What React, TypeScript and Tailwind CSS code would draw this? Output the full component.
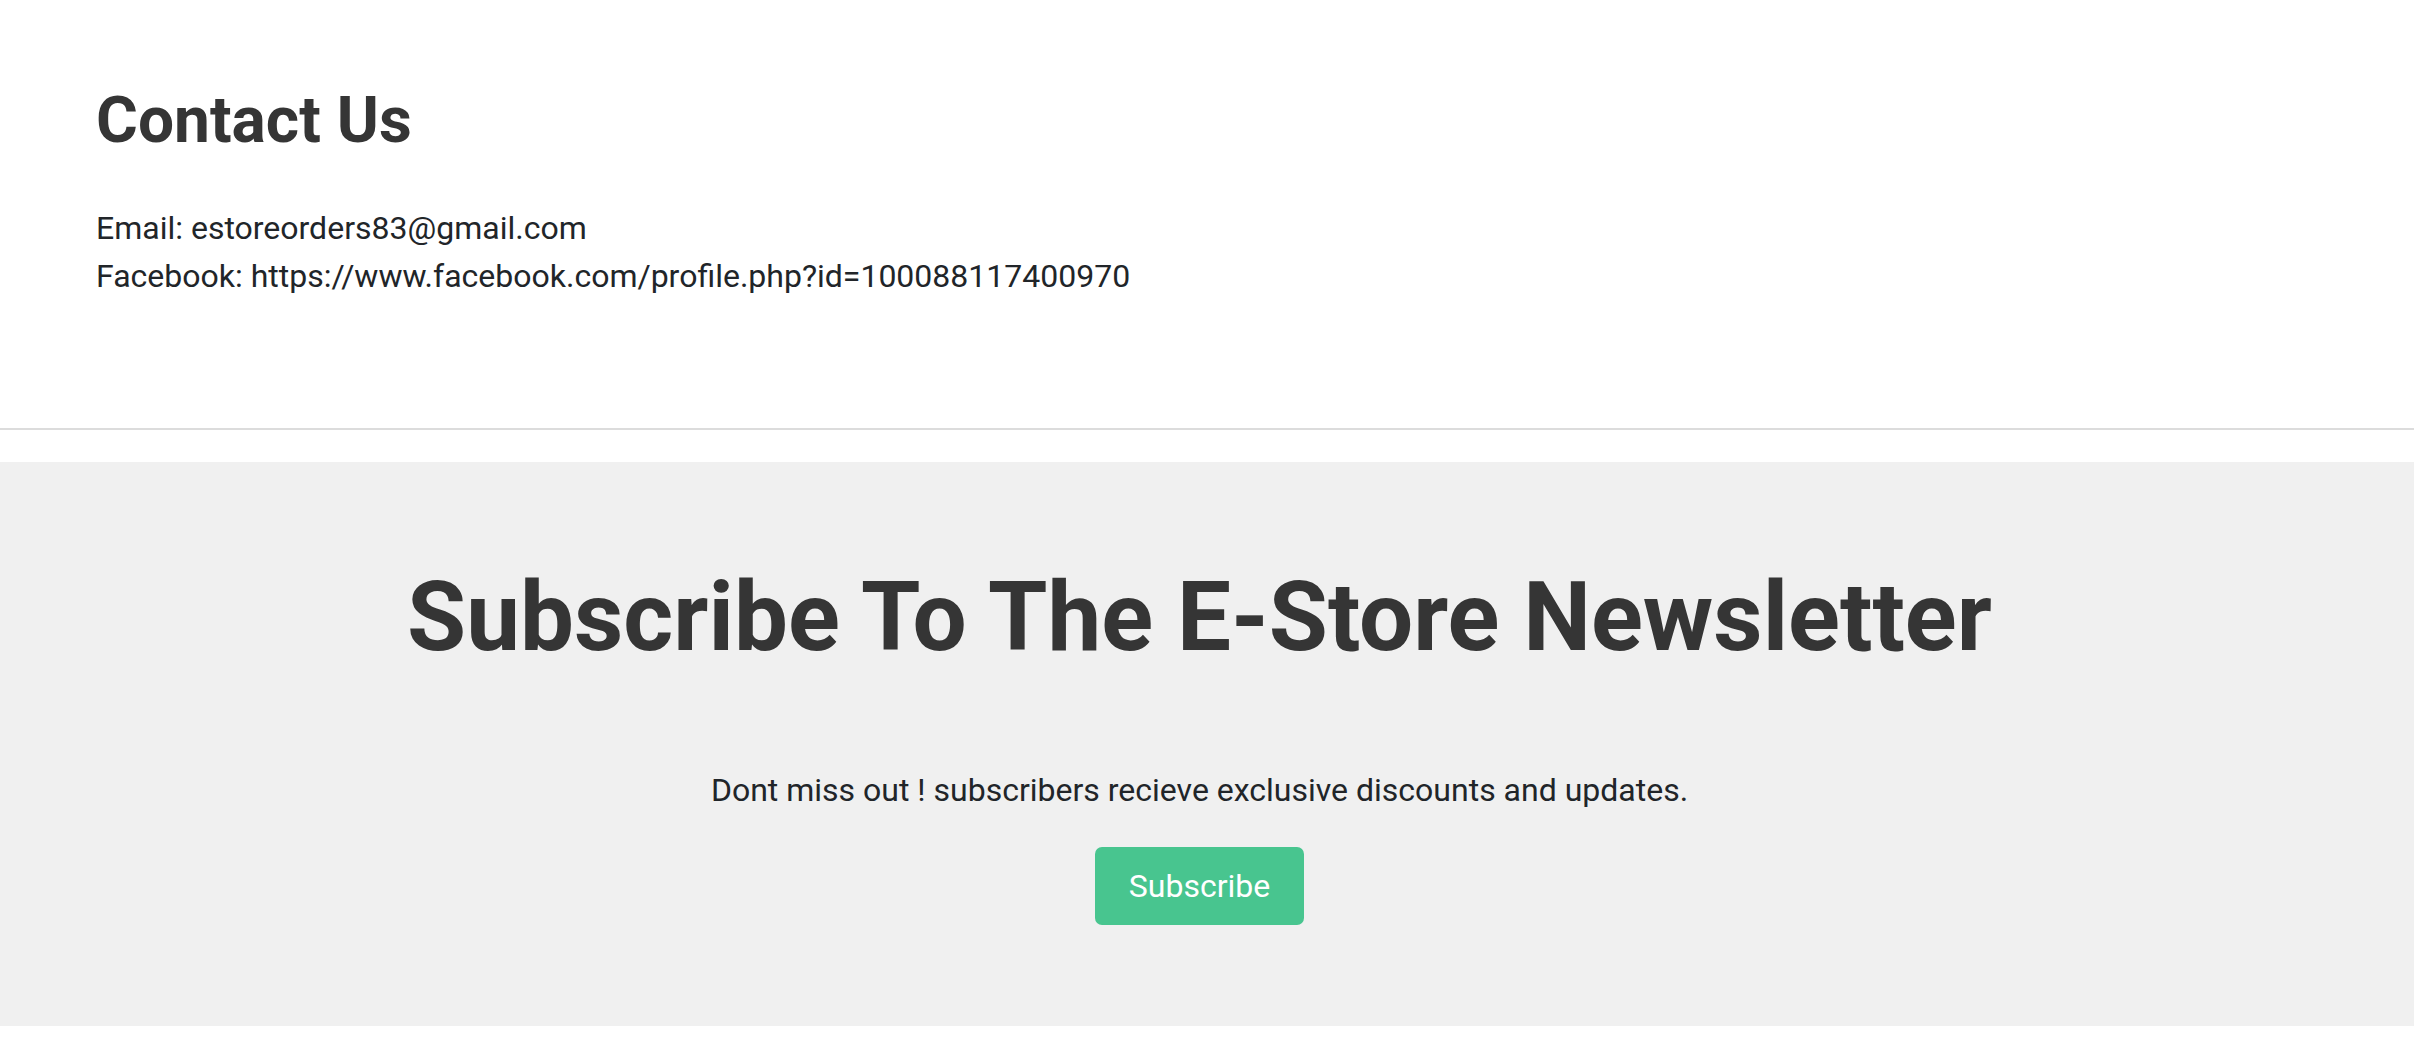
export default function App() {
  return (
    <div className="w-full bg-white font-['Roboto',sans-serif]">
      <section className="h-[428px] pl-[96px] pt-[82px]">
        <h1 className="m-0 text-[64px] leading-[77px] font-bold text-[#353535]">Contact Us</h1>
        <div className="mt-[45px] text-[32px] leading-[48px] text-[#212529]">
          <p className="m-0">Email: estoreorders83@gmail.com</p>
          <p className="m-0">Facebook: https://www.facebook.com/profile.php?id=100088117400970</p>
        </div>
      </section>
      <div className="h-[2px] bg-[#dcdcdc]" />
      <div className="h-[32px]" />
      <section className="h-[564px] bg-[#f0f0f0] pt-[98px] pr-[15px] flex flex-col items-center">
        <h2 className="m-0 text-[96px] leading-[115px] font-bold text-[#353535] whitespace-nowrap">
          Subscribe To The E-Store Newsletter
        </h2>
        <p className="m-0 mt-[91px] text-[32px] leading-[48px] text-[#212529]">
          Dont miss out ! subscribers recieve exclusive discounts and updates.
        </p>
        <button className="mt-[33px] w-[209px] h-[78px] rounded-[7px] bg-[#48c58f] text-white text-[32px] border-0">
          Subscribe
        </button>
      </section>
      <div className="h-[14px]" />
    </div>
  );
}
